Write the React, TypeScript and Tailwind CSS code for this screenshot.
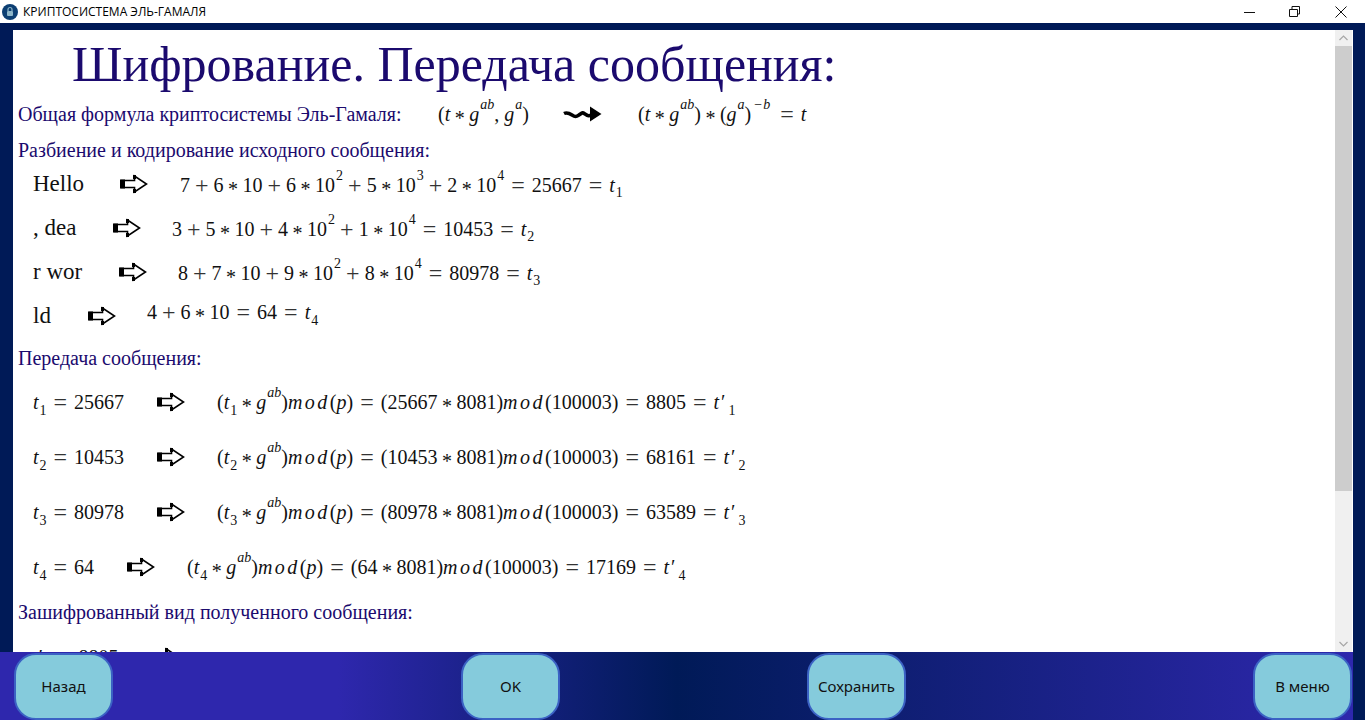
import React from "react";

const serif = { fontFamily: '"Liberation Serif", serif' };

function I({ children }: { children: React.ReactNode }) {
  return <i className="italic">{children}</i>;
}
function Sub({ children }: { children: React.ReactNode }) {
  return <sub className="ml-[1px] align-[-2px] text-[14px] leading-none">{children}</sub>;
}
function Sup({ children }: { children: React.ReactNode }) {
  return <sup className="ml-[1px] align-[5px] text-[14px] leading-none">{children}</sup>;
}
function Eq() {
  return <span className="mx-[7px] align-[-1px] text-[24px] leading-none text-[#333]">=</span>;
}
function Plus() {
  return <span className="mx-[5px] align-[-1px] text-[24px] leading-none text-[#333]">+</span>;
}
function Star() {
  return <span className="mx-[4.5px] align-[-4px] leading-none">*</span>;
}
function ModWord() {
  return <i className="tracking-[2.5px] italic">mod</i>;
}

function BlockArrow() {
  return (
    <svg width="28" height="20" viewBox="0 0 28 20" className="shrink-0">
      <path d="M1.5 6.5H14.5V2L26.5 10L14.5 18V13.5H1.5Z" fill="white" stroke="black" strokeWidth="1.6" />
      <rect x="0" y="5.5" width="5" height="9" fill="black" />
      <rect x="13" y="1" width="3" height="4" fill="black" />
      <rect x="13" y="15" width="3" height="4" fill="black" />
    </svg>
  );
}

function Squiggle() {
  return (
    <svg width="40" height="16" viewBox="0 0 40 16" className="shrink-0">
      <path d="M1 7.5C4 6 6 7 9 9S13 11 16 9S19 6 22 8S26 10.5 29 8.5" fill="none" stroke="black" strokeWidth="3.6" />
      <path d="M27 0.5L38.5 8L27 15.5Z" fill="black" />
    </svg>
  );
}

function Heading({ children, className = "" }: { children: React.ReactNode; className?: string }) {
  return <div className={"pl-[5px] text-[20px] leading-[22px] text-[#1b0a6e] " + className}>{children}</div>;
}

function Encoded({ label, w, aw, mt, children, up = false }: { label: string; w: string; aw: string; mt: string; children: React.ReactNode; up?: boolean }) {
  return (
    <div className={"flex h-[28px] items-center pl-[20px] text-[#111] " + mt}>
      <span className={"mt-[1px] shrink-0 text-[23px] " + w}>{label}</span>
      <BlockArrow />
      <span className={"text-[20px] whitespace-nowrap " + aw + (up ? " -mt-[8px]" : " mt-[1px]")}>{children}</span>
    </div>
  );
}

function Mod({ n, t, w, aw, mt, r }: { n: string; t: string; w: string; aw: string; mt: string; r: string }) {
  return (
    <div className={"flex h-[28px] items-center pl-[20px] text-[20px] whitespace-nowrap text-[#111] " + mt}>
      <span className={"shrink-0 " + w}><I>t</I><Sub>{n}</Sub><Eq />{t}</span>
      <BlockArrow />
      <span className={aw}>
        (<I>t</I><Sub>{n}</Sub><Star /><I>g</I><Sup><I>ab</I></Sup>)<ModWord />(<I>p</I>)<Eq />({t}<Star />8081)<ModWord />(100003)<Eq />{r}<Eq /><I>t</I><span className="mx-[2px]">′</span><Sub>{n}</Sub>
      </span>
    </div>
  );
}

function Btn({ children, className }: { children: React.ReactNode; className: string }) {
  return (
    <button
      className={"h-[67px] w-[99px] shrink-0 rounded-[22px] border-2 border-[#3b62c4] bg-[#85cbdc] text-[15px] text-[#111] " + className}
      style={{ fontFamily: '"Noto Sans", sans-serif' }}
    >
      {children}
    </button>
  );
}

export default function App() {
  return (
    <div className="flex h-[720px] w-[1365px] flex-col overflow-hidden bg-[#001a57]" style={serif}>
      <div className="flex h-[23px] shrink-0 items-center bg-white">
        <svg width="16" height="16" viewBox="0 0 16 16" className="ml-[2px] shrink-0">
          <circle cx="8" cy="8" r="8" fill="#0d3f73" />
          <rect x="5" y="7" width="6" height="5" rx="1" fill="#8fb7c9" />
          <path d="M6 7V5.5a2 2 0 0 1 4 0V7" fill="none" stroke="#8fb7c9" strokeWidth="1.2" />
        </svg>
        <span className="ml-[5px] text-[12px] text-black" style={{ fontFamily: '"Open Sans", sans-serif' }}>КРИПТОСИСТЕМА ЭЛЬ-ГАМАЛЯ</span>
        <div className="ml-auto flex items-center">
          <svg width="12" height="12" viewBox="0 0 12 12" className="mr-[33px]"><path d="M0 6.5H11" stroke="#111" strokeWidth="1" /></svg>
          <svg width="12" height="12" viewBox="0 0 12 12" className="mr-[34px]">
            <path d="M.5 3.5H8.5V10.5H.5Z M3 3V.5H10.5V8H9" fill="none" stroke="#111" strokeWidth="1" />
          </svg>
          <svg width="12" height="12" viewBox="0 0 12 12" className="mr-[18px]"><path d="M.5 .5L11.5 11.5M11.5 .5L.5 11.5" stroke="#111" strokeWidth="1" /></svg>
        </div>
      </div>

      <div className="mt-[7px] ml-[13px] flex h-[622px] w-[1340px] shrink-0 bg-white">
        <div className="min-w-0 flex-1 overflow-hidden">
          <div className="mt-[4px] pl-[59px] text-[50px] leading-[60px] whitespace-nowrap text-[#1b0a6e]">Шифрование. Передача сообщения:</div>

          <div className="mt-[8px] flex h-[24px] items-center pl-[5px] whitespace-nowrap">
            <span className="w-[420px] shrink-0 text-[20px] text-[#1b0a6e]">Общая формула криптосистемы Эль-Гамаля:</span>
            <span className="w-[125px] shrink-0 text-[20px] text-[#111]">(<I>t</I><Star /><I>g</I><Sup><I>ab</I></Sup>, <I>g</I><Sup><I>a</I></Sup>)</span>
            <Squiggle />
            <span className="ml-[35px] text-[20px] text-[#111]">(<I>t</I><Star /><I>g</I><Sup><I>ab</I></Sup>)<Star />(<I>g</I><Sup><I>a</I></Sup>)<span className="ml-[2px]"><Sup>−<span className="ml-[1px]"><I>b</I></span></Sup></span><span className="ml-[3px]"><Eq /></span><I>t</I></span>
          </div>

          <Heading className="mt-[13px]">Разбиение и кодирование исходного сообщения:</Heading>

          <Encoded label="Hello" w="w-[87px]" aw="ml-[32px]" mt="mt-[9px]">7<Plus />6<Star />10<Plus />6<Star />10<Sup>2</Sup><Plus />5<Star />10<Sup>3</Sup><Plus />2<Star />10<Sup>4</Sup><Eq />25667<Eq /><I>t</I><Sub>1</Sub></Encoded>
          <Encoded label=", dea" w="w-[80px]" aw="ml-[31px]" mt="mt-[16px]">3<Plus />5<Star />10<Plus />4<Star />10<Sup>2</Sup><Plus />1<Star />10<Sup>4</Sup><Eq />10453<Eq /><I>t</I><Sub>2</Sub></Encoded>
          <Encoded label="r wor" w="w-[86px]" aw="ml-[31px]" mt="mt-[16px]">8<Plus />7<Star />10<Plus />9<Star />10<Sup>2</Sup><Plus />8<Star />10<Sup>4</Sup><Eq />80978<Eq /><I>t</I><Sub>3</Sub></Encoded>
          <Encoded label="ld" w="w-[55px]" aw="ml-[31px]" mt="mt-[16px]" up>4<Plus />6<Star />10<Eq />64<Eq /><I>t</I><Sub>4</Sub></Encoded>

          <Heading className="mt-[17px]">Передача сообщения:</Heading>

          <Mod n="1" t="25667" w="w-[124px]" aw="ml-[32px]" mt="mt-[19px]" r="8805" />
          <Mod n="2" t="10453" w="w-[124px]" aw="ml-[32px]" mt="mt-[27px]" r="68161" />
          <Mod n="3" t="80978" w="w-[124px]" aw="ml-[32px]" mt="mt-[27px]" r="63589" />
          <Mod n="4" t="64" w="w-[94px]" aw="ml-[32px]" mt="mt-[27px]" r="17169" />

          <Heading className="mt-[20px]">Зашифрованный вид полученного сообщения:</Heading>

          <div className="mt-[20px] flex h-[28px] items-center pl-[20px] text-[20px] whitespace-nowrap text-[#111]">
            <span className="w-[119px] shrink-0"><I>t</I>′<Sub>1</Sub><Eq />8805</span>
            <BlockArrow />
          </div>
        </div>

        <div className="mr-[1px] flex w-[17px] shrink-0 flex-col bg-[#f0f0f0]">
          <div className="flex h-[16px] items-center justify-center">
            <svg width="9" height="6" viewBox="0 0 9 6"><path d="M.5 5L4.5 1L8.5 5" fill="none" stroke="#a6a6a6" strokeWidth="1.2" /></svg>
          </div>
          <div className="h-[445px] bg-[#cdcdcd]" />
          <div className="mt-auto flex h-[16px] items-center justify-center">
            <svg width="9" height="6" viewBox="0 0 9 6"><path d="M.5 1L4.5 5L8.5 1" fill="none" stroke="#a6a6a6" strokeWidth="1.2" /></svg>
          </div>
        </div>
      </div>

      <div className="flex h-[68px] w-[1353px] shrink-0 items-end bg-[linear-gradient(90deg,#2e27ad_0%,#2e27ad_25%,#001a57_50%,#2e27ad_100%)] pl-[14px]">
        <Btn className="">Назад</Btn>
        <Btn className="ml-[348px]">OK</Btn>
        <Btn className="ml-[247px]">Сохранить</Btn>
        <Btn className="ml-[347px]">В меню</Btn>
      </div>
    </div>
  );
}
